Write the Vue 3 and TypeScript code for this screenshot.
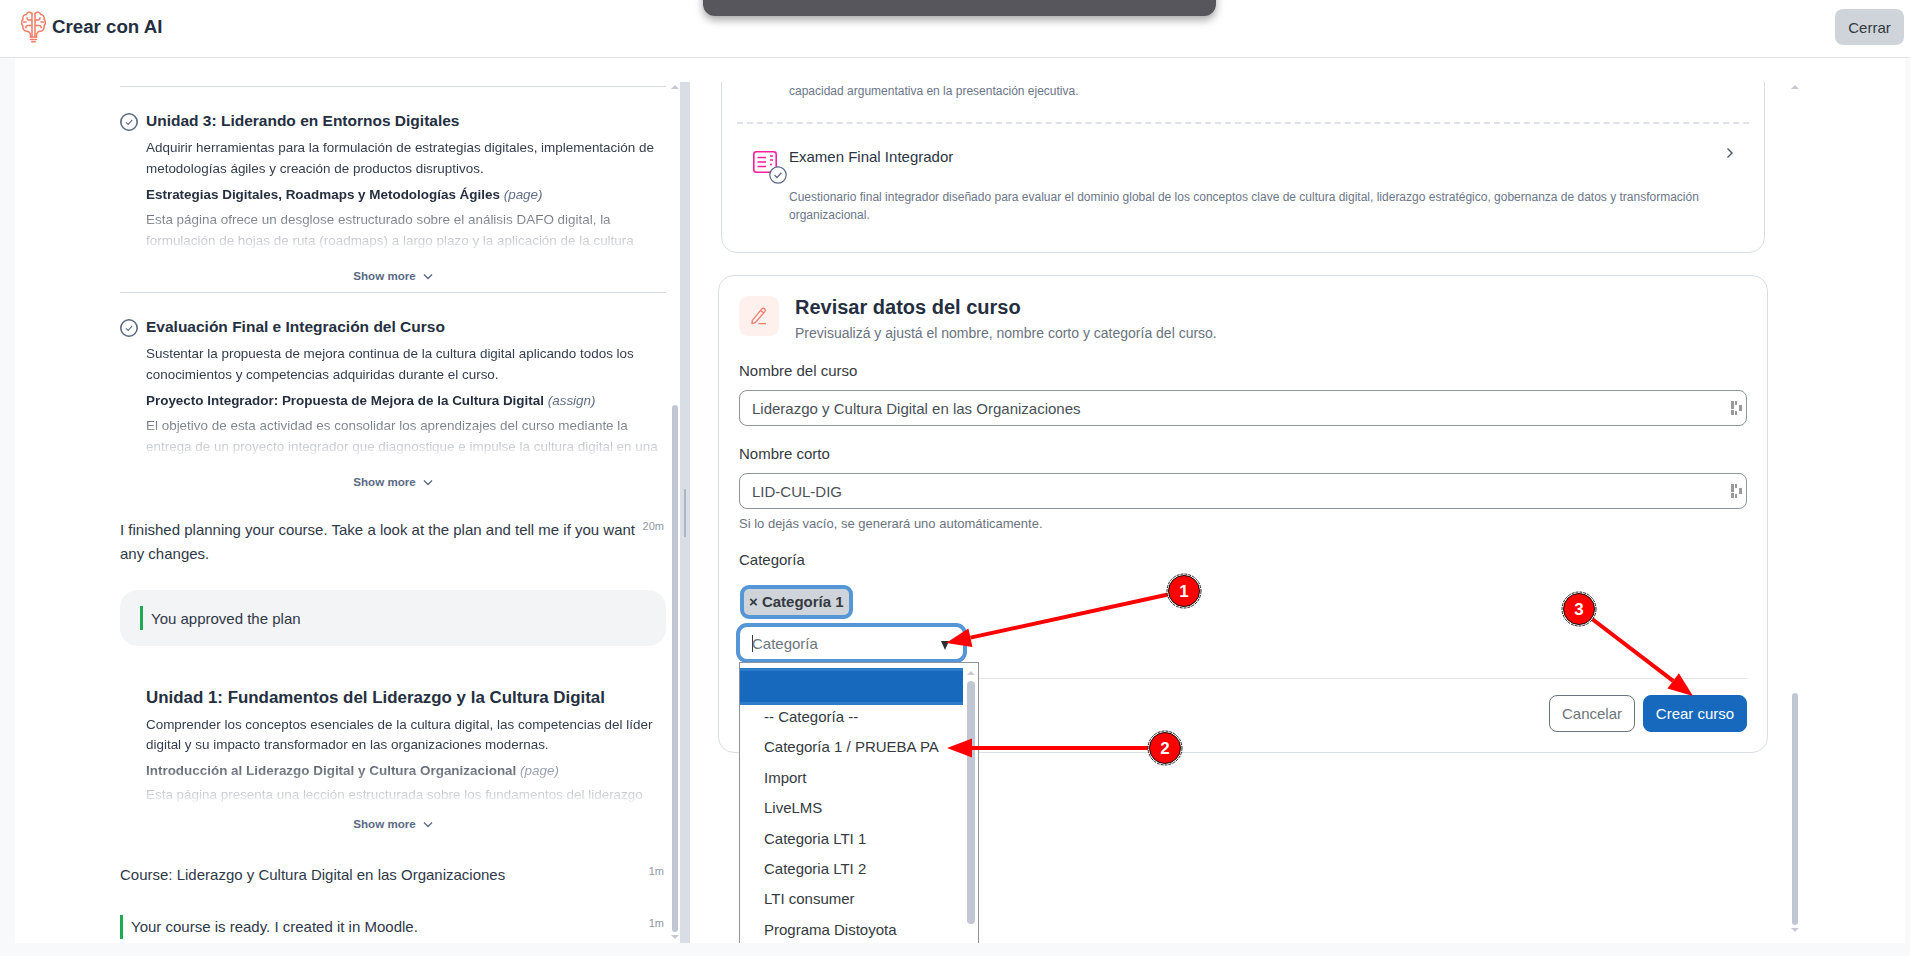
<script setup lang="ts">
interface Section { title: string; desc: string; item: string; kind: string; body: string }
const sections: Section[] = [
  {
    title: 'Unidad 3: Liderando en Entornos Digitales',
    desc: 'Adquirir herramientas para la formulación de estrategias digitales, implementación de metodologías ágiles y creación de productos disruptivos.',
    item: 'Estrategias Digitales, Roadmaps y Metodologías Ágiles',
    kind: '(page)',
    body: 'Esta página ofrece un desglose estructurado sobre el análisis DAFO digital, la formulación de hojas de ruta (roadmaps) a largo plazo y la aplicación de la cultura'
  },
  {
    title: 'Evaluación Final e Integración del Curso',
    desc: 'Sustentar la propuesta de mejora continua de la cultura digital aplicando todos los conocimientos y competencias adquiridas durante el curso.',
    item: 'Proyecto Integrador: Propuesta de Mejora de la Cultura Digital',
    kind: '(assign)',
    body: 'El objetivo de esta actividad es consolidar los aprendizajes del curso mediante la entrega de un proyecto integrador que diagnostique e impulse la cultura digital en una'
  }
]
const options: string[] = ['-- Categoría --', 'Categoría 1 / PRUEBA PA', 'Import', 'LiveLMS', 'Categoria LTI 1', 'Categoria LTI 2', 'LTI consumer', 'Programa Distoyota']

interface Marker { n: number; cx: number; cy: number; tx: number; ty: number }
const markers: Marker[] = [
  { n: 1, cx: 1184, cy: 591, tx: 946, ty: 643 },
  { n: 2, cx: 1165, cy: 748, tx: 947, ty: 748 },
  { n: 3, cx: 1579, cy: 609, tx: 1693, ty: 696 }
]
function geom(m: Marker) {
  const dx = m.tx - m.cx
  const dy = m.ty - m.cy
  const len = Math.hypot(dx, dy)
  const ux = dx / len
  const uy = dy / len
  const bx = m.tx - ux * 25
  const by = m.ty - uy * 25
  const head = [
    `${m.tx},${m.ty}`,
    `${bx - uy * 9.5},${by + ux * 9.5}`,
    `${bx + uy * 9.5},${by - ux * 9.5}`
  ].join(' ')
  return { bx, by, head }
}
</script>

<template>
  <div class="page">
    <header class="topbar">
      <div class="brand">
        <svg class="logo" viewBox="0 0 25 32" fill="none" stroke="#f47b67" stroke-width="1.5" stroke-linecap="round" stroke-linejoin="round">
          <g>
            <path d="M11 2.5C9 .6 6 1 5.3 3.6 3 3.6 1.2 5.5 2 8.2 .2 9.8 .2 13.2 2 15 1.4 17.6 3 20.4 6 20.2 7.5 20.2 9.3 22 9.5 24V26" />
            <path d="M11 2.5V26M11 9H8C6.5 9 6 8 6 6.8M11 14.5H7C5.4 14.5 4.8 15.5 4.8 16.7M2.6 11H5" />
          </g>
          <g transform="matrix(-1 0 0 1 25 0)">
            <path d="M11 2.5C9 .6 6 1 5.3 3.6 3 3.6 1.2 5.5 2 8.2 .2 9.8 .2 13.2 2 15 1.4 17.6 3 20.4 6 20.2 7.5 20.2 9.3 22 9.5 24V26" />
            <path d="M11 2.5V26M11 9H8C6.5 9 6 8 6 6.8M11 14.5H7C5.4 14.5 4.8 15.5 4.8 16.7M2.6 11H5" />
          </g>
          <path d="M9.5 26H15.5M9.5 28.4H15.5M10.8 30.8H14.2" />
        </svg>
        <span class="brand-name">Crear con AI</span>
      </div>
      <button class="close">Cerrar</button>
    </header>

    <main class="workspace">
      <section class="chat">
        <div class="chat-scroll">
          <article v-for="s in sections" :key="s.title" class="unit">
            <h3 class="unit-title">
              <svg class="check" viewBox="0 0 18 18" fill="none" stroke="#5a6a85"><circle cx="9" cy="9" r="8.2" stroke-width="1.6" /><path d="M6 9.3 8.2 11.4 12.2 6.8" stroke-width="1.1" /></svg>
              {{ s.title }}
            </h3>
            <div class="fade">
              <p class="unit-desc">{{ s.desc }}</p>
              <p class="unit-item"><b>{{ s.item }}</b> <i>{{ s.kind }}</i></p>
              <p class="unit-desc body">{{ s.body }}</p>
            </div>
            <div class="more">Show more <svg viewBox="0 0 10 7" fill="none" stroke="#5a6a85" stroke-width="1.4"><path d="M1 1.5 5 5.5 9 1.5" /></svg></div>
          </article>

          <div class="msg first-msg">
            <p>I finished planning your course. Take a look at the plan and tell me if you want any changes.</p>
            <time>20m</time>
          </div>
          <div class="approved"><span class="bar"></span>You approved the plan</div>

          <article class="plan">
            <h3 class="plan-title">Unidad 1: Fundamentos del Liderazgo y la Cultura Digital</h3>
            <div class="fade plan-fade">
              <p class="unit-desc">Comprender los conceptos esenciales de la cultura digital, las competencias del líder digital y su impacto transformador en las organizaciones modernas.</p>
              <p class="unit-item"><b>Introducción al Liderazgo Digital y Cultura Organizacional</b> <i>(page)</i></p>
              <p class="unit-desc body">Esta página presenta una lección estructurada sobre los fundamentos del liderazgo</p>
            </div>
            <div class="more plan-more">Show more <svg viewBox="0 0 10 7" fill="none" stroke="#5a6a85" stroke-width="1.4"><path d="M1 1.5 5 5.5 9 1.5" /></svg></div>
          </article>

          <div class="msg course-msg">
            <p>Course: Liderazgo y Cultura Digital en las Organizaciones</p>
            <time>1m</time>
          </div>
          <div class="msg ready-msg">
            <span class="bar"></span>
            <p>Your course is ready. I created it in Moodle.</p>
            <time>1m</time>
          </div>
        </div>
        <div class="scrollbar chat-bar">
          <span class="arrow up"></span>
          <span class="thumb"></span>
          <span class="arrow down"></span>
        </div>
      </section>

      <div class="splitter"><span></span></div>

      <section class="preview">
        <div class="preview-scroll">
          <div class="card activities">
            <p class="act-text">capacidad argumentativa en la presentación ejecutiva.</p>
            <div class="act-row">
              <div class="act-head">
                <span class="act-icon">
                  <svg viewBox="0 0 24 22" fill="none" stroke="#ff1f9c" stroke-width="1.6" width="24" height="22"><rect x=".8" y=".8" width="22.4" height="20.4" rx="2.5" /><path d="M4.5 6.5H13M4.5 11H13M4.5 15.5H13M17 5H20M17 9H20M17 13.5H19" /></svg>
                  <svg class="badge" viewBox="0 0 18 18" fill="#fff" stroke="#5a6a85"><circle cx="9" cy="9" r="8.2" stroke-width="1.2" /><path d="M5.6 9.3 8 11.6 12.4 6.8" fill="none" stroke-width="1.4" /></svg>
                </span>
                <span class="act-title">Examen Final Integrador</span>
                <svg class="act-chevron" viewBox="0 0 8 12" fill="none" stroke="#4a5568" stroke-width="1.4"><path d="M1.5 1.5 6 6 1.5 10.5" /></svg>
              </div>
              <p class="act-text act-desc">Cuestionario final integrador diseñado para evaluar el dominio global de los conceptos clave de cultura digital, liderazgo estratégico, gobernanza de datos y transformación organizacional.</p>
            </div>
          </div>

          <div class="card review">
            <div class="review-head">
              <span class="pencil">
                <svg viewBox="0 0 16 18" width="16" height="18" fill="none" stroke="#ef7d6d" stroke-width="1.3" stroke-linejoin="round"><path d="M1.2 13.6 10.6 2.2C11.4 1.2 12.6 1.1 13.5 1.8 14.4 2.5 14.5 3.8 13.7 4.7L4.3 15.6 1 16.6ZM9.6 3.4 12.7 5.9M7.5 16.6H15" /></svg>
              </span>
              <div>
                <h2>Revisar datos del curso</h2>
                <p>Previsualizá y ajustá el nombre, nombre corto y categoría del curso.</p>
              </div>
            </div>

            <label class="label">Nombre del curso</label>
            <div class="field">
              <span>Liderazgo y Cultura Digital en las Organizaciones</span>
              <svg viewBox="0 0 11 14" width="11" height="14" fill="#9a9a9a"><path d="M0 0H3V8H0ZM0 9H3V14H0ZM4 0H6V4H4ZM4 10H6V14H4ZM8 4H11V10H8Z" /></svg>
            </div>

            <label class="label">Nombre corto</label>
            <div class="field">
              <span>LID-CUL-DIG</span>
              <svg viewBox="0 0 11 14" width="11" height="14" fill="#9a9a9a"><path d="M0 0H3V8H0ZM0 9H3V14H0ZM4 0H6V4H4ZM4 10H6V14H4ZM8 4H11V10H8Z" /></svg>
            </div>
            <p class="hint">Si lo dejás vacío, se generará uno automáticamente.</p>

            <label class="label cat-label">Categoría</label>
            <div class="chip">× Categoría 1</div>
            <div class="select">
              <span class="caret"></span><span class="placeholder">Categoría</span>
              <span class="tri"></span>
              <div class="dropdown">
                <div class="list">
                  <div class="blank"></div>
                  <div class="options">
                    <div v-for="o in options" :key="o" class="option">{{ o }}</div>
                  </div>
                </div>
                <div class="scrollbar drop-bar">
                  <span class="arrow up"></span>
                  <span class="thumb"></span>
                </div>
              </div>
            </div>

            <div class="actions">
              <button class="btn ghost">Cancelar</button>
              <button class="btn primary">Crear curso</button>
            </div>
          </div>
        </div>
        <div class="scrollbar preview-bar">
          <span class="arrow up"></span>
          <span class="thumb"></span>
          <span class="arrow down"></span>
        </div>
      </section>
    </main>

    <div class="toast"></div>

    <svg class="marks" width="1910" height="956" viewBox="0 0 1910 956">
      <g v-for="m in markers" :key="m.n">
        <line :x1="m.cx" :y1="m.cy" :x2="geom(m).bx" :y2="geom(m).by" stroke="#fe0000" stroke-width="4" />
        <polygon :points="geom(m).head" fill="#fe0000" />
        <circle :cx="m.cx" :cy="m.cy" r="17" fill="#fff" stroke="#222" stroke-width="1" stroke-dasharray="3 1" />
        <circle :cx="m.cx" :cy="m.cy" r="15.5" fill="#fe0000" stroke="#111" stroke-width="1" />
        <text :x="m.cx" :y="m.cy + 6" text-anchor="middle" class="mark-text">{{ m.n }}</text>
      </g>
    </svg>
  </div>
</template>

<style>
html, body { margin: 0; background: #f8f9fb; }
</style>

<style scoped>
* { box-sizing: border-box; }
p, h2, h3 { margin: 0; }
.page {
  position: relative;
  height: 956px;
  width: 1910px;
  overflow: hidden;
  display: flex;
  flex-direction: column;
  background: #f8f9fb;
  color: #2b3443;
  font-family: "Liberation Sans", Arial, sans-serif;
}
.topbar {
  height: 58px;
  flex: none;
  background: #fff;
  border-bottom: 1px solid #dee2e6;
  display: flex;
  align-items: flex-start;
  justify-content: space-between;
  padding: 9px 6px 0 21px;
}
.brand { display: flex; align-items: center; gap: 6px; margin-top: 2px; }
.logo { width: 25px; height: 32px; }
.brand-name { font-size: 18.7px; font-weight: 700; color: #252f3f; }
.close {
  width: 69px; height: 36px;
  border: 0; border-radius: 8px;
  background: #ced4da; color: #343a40;
  font: 15px "Liberation Sans", Arial, sans-serif;
}
.workspace {
  flex: 1;
  min-height: 0;
  margin: 0 5px 13px 15px;
  padding-top: 24px;
  background: #fff;
  display: flex;
}
.chat { width: 665px; flex: none; display: flex; padding-left: 105px; overflow: hidden; }
.chat-scroll { width: 546px; flex: none; margin-right: 6px; overflow: hidden; }
.scrollbar { width: 6px; flex: none; display: flex; flex-direction: column; align-items: center; position: relative; }
.arrow { width: 0; height: 0; border-left: 4px solid transparent; border-right: 4px solid transparent; flex: none; }
.arrow.up { border-bottom: 4px solid #c5cad6; margin-top: 3px; }
.arrow.down { border-top: 4px solid #c5cad6; margin-top: 3px; }
.thumb { display: block; width: 100%; background: #c0c6d4; border-radius: 3px; flex: none; }
.chat-bar .thumb { margin-top: 316px; height: 527px; }
.splitter { width: 10px; flex: none; background: #d8dde6; position: relative; }
.splitter span { position: absolute; left: 4px; top: 407px; width: 2px; height: 48px; background: #aeb6c6; }
.unit { height: 206px; border-top: 1px solid #d5dae3; margin-top: 4px; padding-top: 22px; }
.unit + .unit { margin-top: 0; }
.unit-title { position: relative; padding-left: 26px; font-size: 15.5px; line-height: 24px; font-weight: 700; color: #252f3f; }
.check { position: absolute; left: 0; top: 4px; width: 18px; height: 18px; }
.fade {
  margin: 4px 0 0 26px;
  height: 118px;
  overflow: hidden;
  -webkit-mask-image: linear-gradient(to bottom, #000 calc(100% - 56px), transparent);
  mask-image: linear-gradient(to bottom, #000 calc(100% - 56px), transparent);
}
.unit-desc { font-size: 13.44px; line-height: 21px; color: #343d4d; }
.unit-item { font-size: 13.44px; line-height: 21px; margin: 5px 0 4px; color: #252f3f; }
.unit-item b { font-weight: 700; }
.unit-item i { color: #5f6f89; }
.more {
  display: flex; align-items: center; justify-content: center; gap: 7px;
  height: 18px; margin-top: 11px;
  font-size: 11.6px; font-weight: 700; color: #5a6a85;
}
.more svg { width: 10px; height: 7px; margin-top: 3px; }
.msg { position: relative; display: flex; font-size: 15px; line-height: 24px; color: #2f3847; }
.msg time { position: absolute; right: 2px; top: 1px; font-size: 11px; line-height: 14px; color: #8f98a8; }
.first-msg { margin-top: 20px; padding-right: 30px; }
.approved {
  margin-top: 24px; height: 56px;
  background: #f3f4f5; border-radius: 18px;
  display: flex; align-items: center; padding-left: 20px;
  font-size: 15px; color: #2f3847;
}
.bar { width: 3px; height: 24px; background: #1fa952; margin-right: 8px; flex: none; }
.plan { margin-top: 40px; padding-left: 26px; }
.plan-title { font-size: 16.9px; line-height: 24px; font-weight: 700; color: #252f3f; }
.plan-fade { margin: 5px 0 0; height: 93px; }
.plan-fade .unit-desc { line-height: 20px; }
.plan-more { margin-top: 6px; padding-right: 26px; }
.course-msg { margin-top: 31px; }
.ready-msg { margin-top: 28px; }
.preview { flex: 1; display: flex; padding-left: 28px; overflow: hidden; }
.preview-scroll { width: 1050px; flex: none; }
.preview-bar { margin-left: 24px; }
.preview-bar .thumb { margin-top: 604px; height: 232px; }
.card { background: #fff; border: 1px solid #d9dee7; border-radius: 16px; }
.activities { margin: -20px 3px 0; padding: 19px 15px 28px; height: 191px; }
.act-text { font-size: 12px; line-height: 18px; color: #6b7689; padding-left: 52px; }
.act-row { margin-top: 22px; border-top: 2px dashed #dfe3e9; padding-top: 22px; position: relative; }
.act-head { display: flex; align-items: flex-start; padding-left: 16px; }
.act-icon { position: relative; width: 36px; height: 22px; flex: none; margin-top: 5px; }
.act-icon > svg:first-child { display: block; }
.badge { position: absolute; left: 16px; top: 15px; width: 18px; height: 18px; }
.act-title { font-size: 15px; line-height: 22px; color: #2b3443; flex: 1; }
.act-chevron { width: 8px; height: 12px; margin: 1px 15px 0 0; }
.act-desc { margin-top: 15px; padding-right: 50px; }
.review { margin-top: 22px; height: 478px; padding: 20px; }
.review-head { display: flex; gap: 16px; }
.pencil {
  width: 40px; height: 40px; flex: none; border-radius: 9px;
  background: #fdf0ed; display: flex; align-items: center; justify-content: center;
}
.review-head h2 { font-size: 20px; line-height: 26px; margin-top: -2px; font-weight: 700; color: #252f3f; }
.review-head p { font-size: 14px; line-height: 20px; margin-top: 3px; color: #6a7380; }
.label { display: block; font-size: 15px; line-height: 20px; margin-top: 18px; color: #343a40; }
.field {
  height: 36px; margin-top: 9px;
  border: 1px solid #8e949c; border-radius: 8px;
  display: flex; align-items: center; justify-content: space-between;
  padding: 0 4px 0 12px;
  font-size: 15px; color: #495057;
}
.hint { font-size: 13px; line-height: 18px; margin-top: 6px; color: #6b7380; }
.cat-label { margin-top: 17px; }
.chip {
  margin: 15px 0 0 1px; width: 113px; height: 34px;
  border: 4px solid #5596d6; border-radius: 9px;
  background: #ced4da; color: #343a40;
  font-size: 15px; font-weight: 700; line-height: 26px; padding-left: 5px;
  white-space: nowrap;
}
.select {
  position: relative;
  margin: 4px 0 0 -3px; width: 231px; height: 40px;
  border: 4px solid #5596d6; border-radius: 11px;
  display: flex; align-items: center; padding-left: 12px;
  font-size: 15px; color: #6c757d;
}
.caret { width: 1px; height: 17px; background: #343a40; margin-right: -1px; }
.tri {
  position: absolute; left: 201px; top: 14px;
  width: 0; height: 0;
  border-left: 4px solid transparent; border-right: 4px solid transparent;
  border-top: 9px solid #2b2f36;
}
.dropdown {
  position: absolute; left: -1px; top: 35px; z-index: 3;
  width: 240px; height: 290px;
  background: #fff; border: 1px solid #8c92a0;
  display: flex; padding-top: 5px;
  color: #343a40;
}
.list { width: 223px; flex: none; }
.blank { height: 37px; background: #1669bd; border-top: 3px solid #2d7cc9; border-bottom: 3px solid #2d7cc9; }
.options { margin-top: -3px; }
.option { height: 30.4px; line-height: 30.4px; padding-left: 24px; font-size: 15px; white-space: nowrap; }
.drop-bar { width: 8px; margin-left: 4px; margin-top: 0; }
.drop-bar .thumb { margin-top: 6px; height: 243px; border-radius: 4px; }
.actions {
  margin-top: 15px; padding-top: 16px;
  border-top: 1px solid #e2e5ea;
  display: flex; justify-content: flex-end; gap: 8px;
}
.btn { height: 37px; border-radius: 8px; font: 15px "Liberation Sans", Arial, sans-serif; }
.ghost { width: 86px; background: #fff; border: 1px solid #6c757d; color: #6c757d; }
.primary { width: 104px; background: #1669bd; border: 1px solid #1669bd; color: #fff; }
.toast {
  position: absolute; left: 703px; top: -20px; width: 513px; height: 36px;
  background: #57565c; border-radius: 0 0 12px 12px;
  box-shadow: 0 4px 8px rgba(0, 0, 0, .35);
}
.marks { position: absolute; left: 0; top: 0; z-index: 10; pointer-events: none; }
.mark-text { font: 700 17px "Liberation Sans", Arial, sans-serif; fill: #fff; }
</style>
